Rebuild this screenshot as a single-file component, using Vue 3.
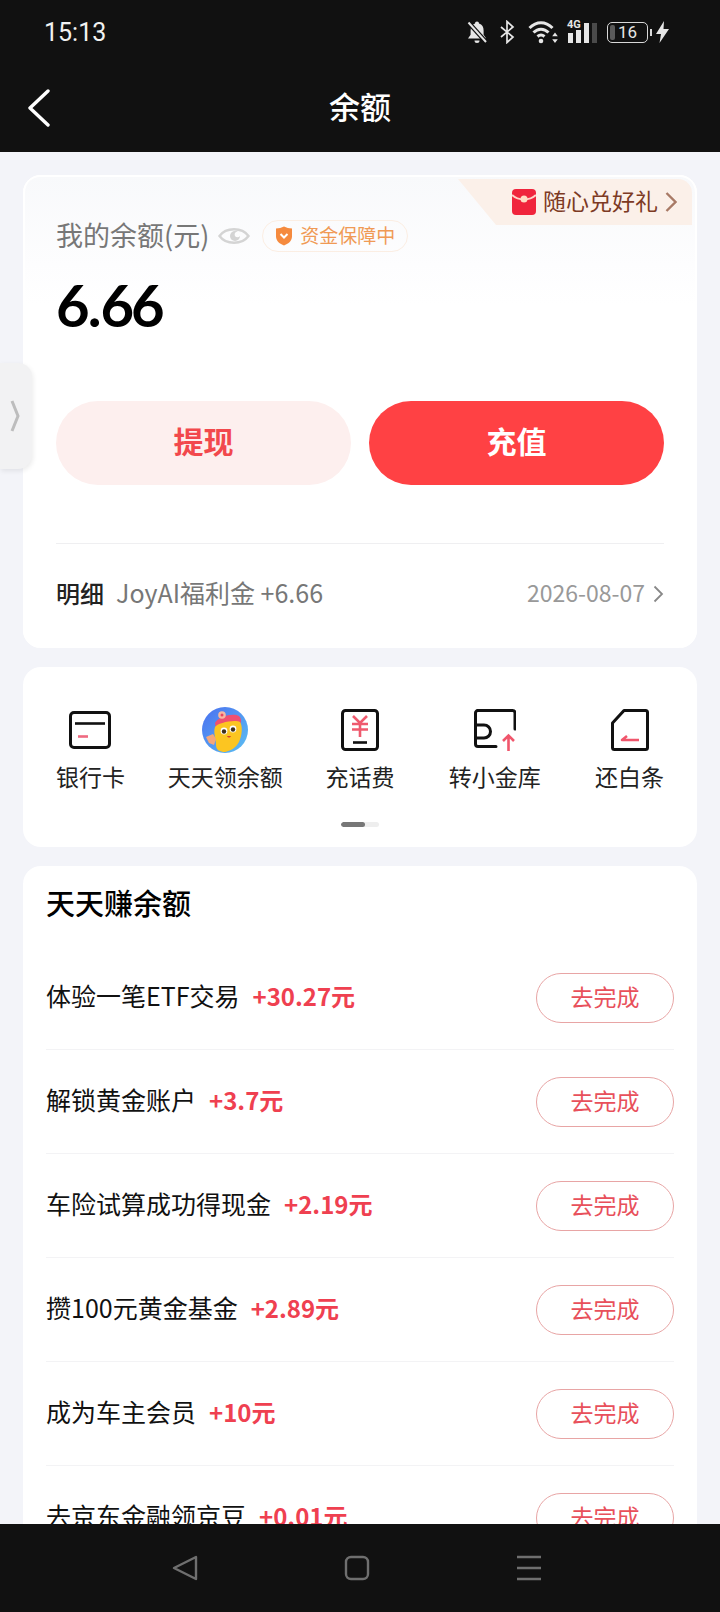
<script setup>
const tasks = [
  { name: '体验一笔ETF交易', gain: '+30.27元' },
  { name: '解锁黄金账户', gain: '+3.7元' },
  { name: '车险试算成功得现金', gain: '+2.19元' },
  { name: '攒100元黄金基金', gain: '+2.89元' },
  { name: '成为车主会员', gain: '+10元' },
  { name: '去京东金融领京豆', gain: '+0.01元' }
]
</script>

<template>
  <div class="screen">
    <div class="status">
      <span class="time">15:13</span>
      <div class="status-icons">
        <svg class="si" width="24" height="24" viewBox="0 0 24 24">
          <path d="M12 1.500c1.200 0 2 .9 2 1.900 3.200.9 4.600 3.600 4.600 7v4.400l2.600 3.700H3l2.600-3.700v-4.400c0-3.400 1.400-6.100 4.400-7 0-1 .8-1.900 2-1.900z" fill="#e6e6e6"/>
          <path d="M9.500 20.500h5a2.500 2.500 0 0 1-5 0z" fill="#e6e6e6"/>
          <path d="M3 2l18 20" stroke="#111" stroke-width="4.500"/>
          <path d="M3.500 2.500l17.500 19.500" stroke="#e6e6e6" stroke-width="2"/>
        </svg>
        <svg class="si bt" width="16" height="24" viewBox="0 0 16 24" fill="none" stroke="#e6e6e6" stroke-width="1.700">
          <path d="M2 7l12 10-6 5.500V1.500L14 7 2 17"/>
        </svg>
        <svg class="si wifi" width="30" height="24" viewBox="0 0 30 24" fill="none" stroke="#e6e6e6" stroke-width="3">
          <path d="M1.500 8c7-7 16-7 23 0M5.500 12.500c4.500-4.500 10.500-4.500 15 0M9.500 16.500c2.500-2.200 4.500-2.200 7 0"/>
          <circle cx="13" cy="21" r="2.300" fill="#e6e6e6" stroke="none"/>
          <path d="M27 12.500l-2.800 3.700h5.600zM27 23l-2.800-3.700h5.600z" fill="#e6e6e6" stroke="none"/>
        </svg>
        <span class="signal">
          <span class="g4">4G</span>
          <svg width="30" height="22" viewBox="0 0 30 22">
            <rect x="1" y="12" width="5" height="10" fill="#e6e6e6"/>
            <rect x="9" y="9" width="5" height="13" fill="#e6e6e6"/>
            <rect x="17" y="2" width="5" height="20" fill="#e6e6e6"/>
            <rect x="25" y="2" width="5" height="20" fill="#4a4a4a"/>
          </svg>
        </span>
        <span class="battery"><i class="fill"></i><b>16</b></span>
        <svg class="si bolt" width="15" height="24" viewBox="0 0 15 24"><path d="M9 1L1 14h5l-1.500 9L14 9H8.500z" fill="#e6e6e6"/></svg>
      </div>
    </div>
    <header class="nav">
      <svg class="back" width="24" height="38" viewBox="0 0 24 38" fill="none" stroke="#fff" stroke-width="3.400" stroke-linecap="round" stroke-linejoin="round">
        <path d="M21 2L3 19l18 17"/>
      </svg>
      <h1>余额</h1>
    </header>

    <main class="content">
      <section class="card balance">
        <div class="tag">
          <svg width="24" height="26" viewBox="0 0 24 26">
            <rect width="24" height="26" rx="4" fill="#f0243c"/>
            <path d="M0 6c6 6 18 6 24 0" stroke="#ffd2c8" stroke-width="2" fill="none"/>
            <circle cx="12" cy="10" r="3.500" fill="#ffdcc4"/>
          </svg>
          <span class="tag-text">随心兑好礼</span>
          <svg width="12" height="22" viewBox="0 0 12 22" fill="none" stroke="#a87a66" stroke-width="2.400">
            <path d="M1.500 2l9 9-9 9"/>
          </svg>
        </div>
        <div class="label-row">
          <span class="label">我的余额(元)</span>
          <svg class="eye" width="32" height="24" viewBox="0 0 32 24" fill="none">
            <path d="M1.500 12C8 3 24 3 30.500 12 24 21 8 21 1.500 12z" stroke="#d4d4d4" stroke-width="2.400"/>
            <circle cx="17" cy="12" r="5" fill="#d4d4d4"/>
            <circle cx="19.500" cy="10.500" r="2.800" fill="#fcfcfd"/>
          </svg>
          <span class="safe">
            <svg width="18" height="20" viewBox="0 0 18 20">
              <path d="M1 2.500C4 2.500 6.500 1.800 9 .5c2.500 1.300 5 2 8 2v8c0 4.500-4 7.500-8 9-4-1.500-8-4.500-8-9z" fill="#f58a3e"/>
              <path d="M5.500 8L9 11.500 12.500 8" stroke="#fff" stroke-width="2" fill="none"/>
            </svg>
            <span class="safe-text">资金保障中</span>
          </span>
        </div>
        <div class="amount">6<span class="dot">.</span>66</div>
        <div class="actions">
          <button class="btn ghost">提现</button>
          <button class="btn solid">充值</button>
        </div>
        <div class="detail">
          <span class="d-title">明细</span>
          <span class="d-text">JoyAI福利金 +6.66</span>
          <span class="d-date">2026-08-07</span>
          <svg width="11" height="18" viewBox="0 0 11 18" fill="none" stroke="#888" stroke-width="1.800">
            <path d="M1.500 1.500L9 9l-7.500 7.500"/>
          </svg>
        </div>
      </section>

      <section class="card tools">
        <div class="tool-grid">
          <div class="tool">
            <div class="ticon">
              <svg width="42" height="38" viewBox="0 0 42 38" fill="none" stroke="#111" stroke-width="3">
                <rect x="1.500" y="1.500" width="39" height="35" rx="3.500"/>
                <path d="M6 12.500h30" stroke-width="2.600"/>
                <path d="M9 25.500h10" stroke="#ef6a80" stroke-width="2.600"/>
              </svg>
            </div>
            <span>银行卡</span>
          </div>
          <div class="tool">
            <div class="ticon">
              <svg width="46" height="46" viewBox="0 0 46 46">
                <defs>
                  <linearGradient id="sky" x1="0" y1="0" x2="1" y2="1">
                    <stop offset="0" stop-color="#4a6ff0"/>
                    <stop offset="1" stop-color="#5cc0f2"/>
                  </linearGradient>
                </defs>
                <circle cx="23" cy="23" r="23" fill="url(#sky)"/>
                <path d="M13 16C17 9 31 6 37 9c3 3 2 6 1 9L14 22z" fill="#ef5070"/>
                <circle cx="20" cy="8" r="3.800" fill="#f7b7a0"/>
                <circle cx="20" cy="8" r="1.500" fill="#e8455f"/>
                <path d="M13 20c2-4 20-8 25-5 3 4 2 14-1 20-3 6-9 9-14 10-5 0-9-2-9-7 0-6-3-12-1-18z" fill="#fcc521"/>
                <circle cx="22" cy="24" r="3.400" fill="#fff"/>
                <circle cx="31" cy="22" r="3.400" fill="#fff"/>
                <circle cx="22" cy="24.500" r="2.200" fill="#40301c"/>
                <circle cx="31" cy="22.500" r="2.200" fill="#40301c"/>
                <path d="M25 29c1 2 3 2 4 0z" fill="#d9432a"/>
                <path d="M4 30l7-3 3 5-2 6-5-2z" fill="#f5a77a"/>
              </svg>
            </div>
            <span>天天领余额</span>
          </div>
          <div class="tool">
            <div class="ticon">
              <svg width="38" height="42" viewBox="0 0 38 42" fill="none" stroke="#111" stroke-width="3">
                <rect x="1.500" y="1.500" width="35" height="39" rx="3"/>
                <path d="M12 33.500h14" stroke-width="2.600"/>
                <path d="M12 7l7 7 7-7M11 15h16M11 20.500h16M19 14v14" stroke="#ef5a6e" stroke-width="2.600"/>
              </svg>
            </div>
            <span>充话费</span>
          </div>
          <div class="tool">
            <div class="ticon">
              <svg width="42" height="42" viewBox="0 0 42 42" fill="none" stroke="#111" stroke-width="3" stroke-linecap="round">
                <path d="M41 20V4a2.500 2.500 0 0 0-2.500-2.500h-34A2.500 2.500 0 0 0 1.500 4v31a2.500 2.500 0 0 0 2.500 2.500h18"/>
                <path d="M2 16h8a6.500 6.500 0 0 1 0 13H2"/>
                <path d="M34.500 42V27M29 32l5.500-5.500L40 32" stroke="#f0566c" stroke-width="2.600" stroke-linecap="butt"/>
              </svg>
            </div>
            <span>转小金库</span>
          </div>
          <div class="tool">
            <div class="ticon">
              <svg width="38" height="42" viewBox="0 0 38 42" fill="none" stroke="#111" stroke-width="3" stroke-linejoin="round">
                <path d="M13 1.500h21.500a2 2 0 0 1 2 2v35a2 2 0 0 1-2 2h-31a2 2 0 0 1-2-2V14z"/>
                <path d="M28 31H11l5-4" stroke="#f0566c" stroke-width="2.600"/>
              </svg>
            </div>
            <span>还白条</span>
          </div>
        </div>
        <div class="indicator"><i></i></div>
      </section>

      <section class="card earn">
        <h2>天天赚余额</h2>
        <div v-for="t in tasks" :key="t.name" class="task">
          <span class="t-name">{{ t.name }}</span>
          <span class="t-gain">{{ t.gain }}</span>
          <span class="t-btn">去完成</span>
        </div>
      </section>
    </main>

    <footer class="sysnav">
      <svg width="26" height="26" viewBox="0 0 26 26" fill="none" stroke="#6f6f6f" stroke-width="2.400" stroke-linejoin="round">
        <path d="M24 2v22L2 13z"/>
      </svg>
      <svg width="26" height="26" viewBox="0 0 26 26" fill="none" stroke="#6f6f6f" stroke-width="2.400">
        <rect x="2" y="2" width="22" height="22" rx="5"/>
      </svg>
      <svg width="26" height="26" viewBox="0 0 26 26" fill="none" stroke="#6f6f6f" stroke-width="2.400">
        <path d="M1 2h24M1 13h24M1 24h24"/>
      </svg>
    </footer>

    <div class="handle">
      <svg width="10" height="32" viewBox="0 0 10 32" fill="none" stroke="#bdbdbd" stroke-width="3">
        <path d="M2 1l6 15-6 15"/>
      </svg>
    </div>
  </div>
</template>

<style scoped>
.screen {
  position: relative;
  width: 720px;
  height: 1612px;
  display: flex;
  flex-direction: column;
  overflow: hidden;
  background: #f3f4f9;
  font-family: "Noto Sans CJK SC", "Noto Sans", sans-serif;
  color: #111;
}
.status {
  height: 64px;
  flex: none;
  background: #111;
  display: flex;
  align-items: center;
  justify-content: space-between;
  padding: 0 50px 0 44px;
}
.time {
  font-family: Roboto, sans-serif;
  font-size: 25px;
  font-weight: 400;
  color: #f2f2f2;
}
.status-icons {
  display: flex;
  align-items: center;
}
.si { display: block; }
.bt { margin-left: 10px; }
.wifi { margin-left: 13px; }
.signal {
  position: relative;
  width: 30px;
  height: 22px;
  display: block;
  margin-left: 9px;
}
.signal svg { display: block; }
.g4 {
  position: absolute;
  left: 0;
  top: -1px;
  font-family: Roboto, sans-serif;
  font-size: 11px;
  font-weight: 700;
  line-height: 10px;
  color: #e6e6e6;
}
.battery {
  position: relative;
  width: 41px;
  height: 21px;
  box-sizing: border-box;
  border: 1.500px solid #d8d8d8;
  border-radius: 5px;
  display: flex;
  align-items: center;
  justify-content: center;
  margin-left: 10px;
}
.battery::after {
  content: "";
  position: absolute;
  right: -5px;
  top: 6px;
  width: 2px;
  height: 7px;
  background: #d8d8d8;
}
.fill {
  position: absolute;
  left: 2px;
  top: 2px;
  bottom: 2px;
  width: 5px;
  background: #5a5a5a;
  border-radius: 2px;
}
.battery b {
  position: relative;
  font-family: Roboto, sans-serif;
  font-size: 17px;
  font-weight: 400;
  color: #e6e6e6;
  line-height: 1;
}
.bolt { margin-left: 7px; }
.nav {
  position: relative;
  height: 88px;
  flex: none;
  background: #111;
  display: flex;
  align-items: center;
  justify-content: center;
}
.back {
  position: absolute;
  left: 27px;
  top: 25px;
}
.nav h1 {
  margin: 0;
  font-size: 31px;
  font-weight: 500;
  color: #fff;
  line-height: 84px;
  padding-bottom: 4px;
}
.content {
  flex: 1;
  min-height: 0;
  overflow: hidden;
  padding: 23px 23px 0;
  display: flex;
  flex-direction: column;
  gap: 19px;
}
.card {
  flex: none;
  background: #fff;
  border-radius: 18px;
}
.balance {
  position: relative;
  height: 473px;
  box-sizing: border-box;
  padding: 45px 33px 0;
  background: linear-gradient(#f8f9fb, #fdfdfe 90px, #fff 130px);
  box-shadow: inset 0 2px 0 #fff, inset 2px 0 0 #fff, inset -2px 0 0 #fff;
}
.tag {
  position: absolute;
  top: 4px;
  right: 5px;
  width: 234px;
  height: 46px;
  box-sizing: border-box;
  padding-left: 54px;
  background: #fbf0e9;
  border-top-right-radius: 14px;
  clip-path: polygon(0 0, 100% 0, 100% 100%, 38px 100%);
  display: flex;
  align-items: center;
  gap: 7px;
  font-size: 23px;
  color: #7d3a24;
}
.tag-text { padding-bottom: 5px; }
.label-row {
  height: 32px;
  display: flex;
  align-items: center;
}
.label {
  font-size: 27px;
  color: #777;
  padding-bottom: 4px;
}
.eye { margin-left: 9px; }
.safe {
  margin-left: 12px;
  height: 32px;
  box-sizing: border-box;
  border: 1px solid #fbeee3;
  border-radius: 16px;
  padding: 0 12px;
  display: flex;
  align-items: center;
  gap: 7px;
  font-size: 19px;
  color: #f09a55;
}
.safe-text { padding-bottom: 4px; }
.amount {
  margin-top: 23px;
  height: 60px;
  line-height: 60px;
  font-family: Lato, sans-serif;
  font-size: 58px;
  font-weight: 700;
  letter-spacing: -3px;
  color: #000;
}
.dot { margin: 0 2px 0 1px; }
.actions {
  margin-top: 66px;
  display: flex;
  gap: 18px;
  padding-bottom: 58px;
  border-bottom: 1px solid #efeff1;
}
.btn {
  flex: 1;
  height: 84px;
  border: 0;
  border-radius: 42px;
  font-family: inherit;
  font-size: 30px;
  font-weight: 700;
  padding: 0 0 6px;
}
.ghost {
  background: #fdefee;
  color: #f2484c;
}
.solid {
  background: #ff4144;
  color: #fff;
}
.detail {
  height: 100px;
  display: flex;
  align-items: center;
  font-size: 25px;
}
.d-title {
  font-size: 24px;
  font-weight: 500;
  color: #222;
  padding-bottom: 4px;
}
.d-text {
  margin-left: 12px;
  color: #777;
  padding-bottom: 4px;
}
.d-date {
  margin-left: auto;
  margin-right: 8px;
  font-size: 23px;
  color: #999;
  padding-bottom: 4px;
}
.tools {
  height: 180px;
  box-sizing: border-box;
  padding-top: 40px;
}
.tool-grid {
  display: grid;
  grid-template-columns: repeat(5, 1fr);
}
.tool {
  display: flex;
  flex-direction: column;
  align-items: center;
  font-size: 23px;
  color: #222;
}
.ticon {
  height: 46px;
  display: flex;
  align-items: center;
  justify-content: center;
  margin-bottom: 8px;
}
.tool span {
  line-height: 30px;
  white-space: nowrap;
}
.indicator {
  width: 38px;
  height: 5px;
  margin: 31px auto 0;
  border-radius: 3px;
  background: #eee;
  overflow: hidden;
}
.indicator i {
  display: block;
  width: 24px;
  height: 5px;
  border-radius: 3px;
  background: #777;
}
.earn {
  padding-top: 16px;
  padding-bottom: 40px;
}
.earn h2 {
  margin: 0 23px 24px;
  font-size: 29px;
  line-height: 40px;
  font-weight: 500;
  color: #000;
}
.task {
  margin: 0 23px;
  height: 104px;
  box-sizing: border-box;
  border-bottom: 1px solid #f3f3f5;
  display: flex;
  align-items: center;
  font-size: 25px;
}
.t-name {
  color: #111;
  padding-bottom: 5px;
}
.t-gain {
  margin-left: 13px;
  color: #ef4050;
  font-size: 24px;
  font-weight: 700;
  padding-bottom: 5px;
}
.t-btn {
  margin-left: auto;
  width: 138px;
  height: 50px;
  box-sizing: border-box;
  border: 1px solid #e8a5a5;
  border-radius: 25px;
  padding-bottom: 4px;
  display: flex;
  align-items: center;
  justify-content: center;
  font-size: 23px;
  color: #e8505b;
}
.sysnav {
  height: 88px;
  flex: none;
  background: #111;
  position: relative;
  display: grid;
  grid-template-columns: 26px 26px 26px;
  justify-content: center;
  column-gap: 146px;
  align-items: start;
  padding: 31px 7px 0 0;
  box-sizing: border-box;
}
.handle {
  position: absolute;
  left: 0;
  top: 363px;
  width: 32px;
  height: 106px;
  background: #f2f2f3;
  border-radius: 0 14px 14px 0;
  box-shadow: 1px 2px 5px rgba(0, 0, 0, 0.08);
  display: flex;
  align-items: center;
  padding-left: 10px;
  box-sizing: border-box;
}
</style>
